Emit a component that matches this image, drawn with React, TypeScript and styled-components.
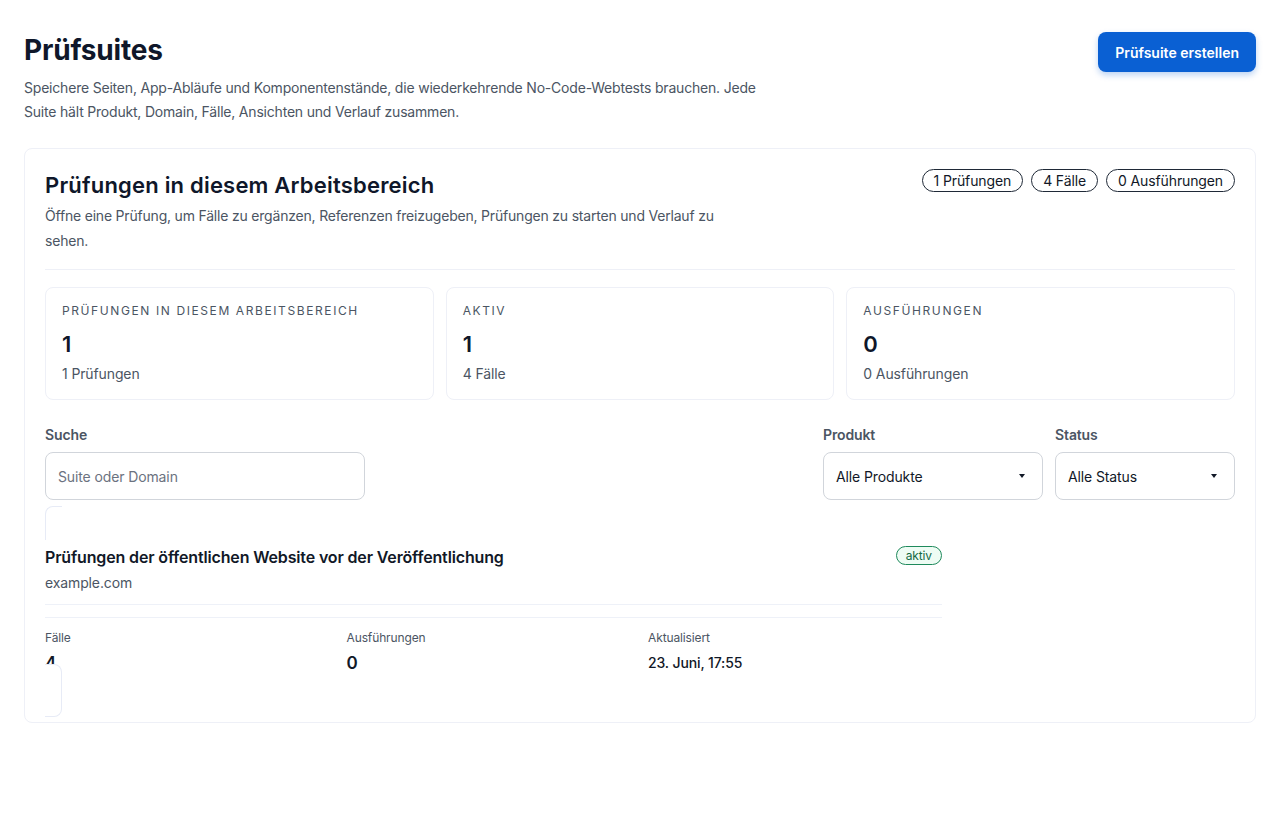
import React from "react";
import styled, { createGlobalStyle } from "styled-components";

const Global = createGlobalStyle`
  html, body { margin: 0; padding: 0; background: #ffffff; }
  body { font-family: Inter, "Noto Sans", Arial, sans-serif; color: #111827; -webkit-font-smoothing: antialiased; letter-spacing: -0.12px; }
  * { box-sizing: border-box; }
`;

const Page = styled.main`
  padding: 32px 24px 24px 24px;
`;

const TopBar = styled.header`
  display: flex;
  justify-content: space-between;
  align-items: flex-start;
`;

const TitleBlock = styled.div`
  display: flex;
  flex-direction: column;
  gap: 8px;
`;

const PageTitle = styled.h1`
  margin: 0;
  font-size: 28px;
  line-height: 36px;
  font-weight: 700;
  color: #0f172a;
  letter-spacing: -0.2px;
`;

const Lead = styled.p`
  margin: 0;
  max-width: 760px;
  font-size: 14px;
  line-height: 24px;
  color: #4b5563;
  letter-spacing: -0.2px;
`;

const PrimaryButton = styled.button`
  height: 40px;
  padding: 0 17px;
  border: none;
  border-radius: 8px;
  background: #0a60d3;
  color: #ffffff;
  font-family: inherit;
  font-size: 14px;
  font-weight: 600;
  letter-spacing: 0;
  box-shadow: 0 3px 6px rgba(10, 96, 211, 0.28);
  cursor: pointer;
`;

const Panel = styled.section`
  margin-top: 24px;
  border: 1px solid #eef0f7;
  border-radius: 8px;
  padding: 20px 20px 5px 20px;
`;

const PanelHeader = styled.div`
  display: flex;
  justify-content: space-between;
  align-items: flex-start;
  padding-bottom: 16px;
  border-bottom: 1px solid #eef0f7;
`;

const PanelTitleBlock = styled.div`
  display: flex;
  flex-direction: column;
  gap: 2px;
`;

const PanelTitle = styled.h2`
  margin: 0;
  font-size: 22px;
  line-height: 32px;
  font-weight: 600;
  color: #0f172a;
  letter-spacing: 0.2px;
`;

const PanelLead = styled.p`
  margin: 0;
  max-width: 690px;
  font-size: 14px;
  line-height: 25px;
  color: #4b5563;
  letter-spacing: -0.2px;
`;

const Pills = styled.div`
  display: flex;
  gap: 8px;
`;

const Pill = styled.span`
  display: inline-flex;
  align-items: center;
  height: 23px;
  padding: 0 11px;
  border: 1px solid #1f2937;
  border-radius: 999px;
  font-size: 14px;
  color: #111827;
  white-space: nowrap;
`;

const StatsGrid = styled.div`
  display: grid;
  grid-template-columns: repeat(3, 1fr);
  gap: 12px;
  margin-top: 17px;
`;

const StatCard = styled.div`
  border: 1px solid #eef0f7;
  border-radius: 8px;
  padding: 15px 16px 15px 16px;
  display: flex;
  flex-direction: column;
`;

const StatLabel = styled.div`
  font-size: 12px;
  line-height: 16px;
  letter-spacing: 1.6px;
  text-transform: uppercase;
  color: #4b5563;
`;

const StatValue = styled.div`
  margin-top: 11px;
  font-size: 22px;
  line-height: 28px;
  font-weight: 600;
  color: #0f172a;
`;

const StatSub = styled.div`
  margin-top: 6px;
  font-size: 14px;
  line-height: 20px;
  color: #4b5563;
`;

const Filters = styled.div`
  display: flex;
  gap: 12px;
  margin-top: 25px;
`;

const Field = styled.label<{ $w: number; $grow?: boolean }>`
  display: flex;
  flex-direction: column;
  gap: 7px;
  width: ${(p) => p.$w}px;
  margin-right: ${(p) => (p.$grow ? "auto" : "0")};
`;

const FieldLabel = styled.span`
  font-size: 14px;
  line-height: 20px;
  font-weight: 600;
  color: #4b5563;
`;

const TextInput = styled.input`
  height: 48px;
  border: 1px solid #d1d5db;
  border-radius: 8px;
  padding: 0 12px;
  font-family: inherit;
  font-size: 14px;
  letter-spacing: -0.12px;
  color: #111827;
  outline: none;
  &::placeholder { color: #6b7280; }
`;

const SelectBox = styled.div`
  height: 48px;
  border: 1px solid #d1d5db;
  border-radius: 8px;
  padding: 0 17px 0 12px;
  display: flex;
  align-items: center;
  justify-content: space-between;
  font-size: 14px;
  color: #111827;
`;

const Caret = styled.span`
  width: 0;
  height: 0;
  border-left: 3.5px solid transparent;
  border-right: 3.5px solid transparent;
  border-top: 4px solid #111827;
`;

const SuiteCard = styled.article`
  margin-top: 6px;
  width: 897px;
  display: flex;
  flex-direction: column;
`;

const FragmentStart = styled.div`
  width: 17px;
  height: 34px;
  border: 1px solid #e7ebf6;
  border-right: none;
  border-bottom: none;
  border-radius: 8px 0 0 0;
  background: #ffffff;
`;

const FragmentEnd = styled.div`
  position: relative;
  z-index: 1;
  margin-top: -11px;
  width: 17px;
  height: 53px;
  border: 1px solid #e7ebf6;
  border-left: none;
  border-radius: 0 8px 8px 0;
  background: #ffffff;
`;

const SuiteHead = styled.div`
  margin-top: 5px;
  display: flex;
  justify-content: space-between;
  align-items: center;
`;

const SuiteTitle = styled.h3`
  margin: 0;
  font-size: 16px;
  line-height: 24px;
  font-weight: 600;
  color: #111827;
  letter-spacing: -0.15px;
`;

const StatusBadge = styled.span`
  display: inline-flex;
  align-items: center;
  height: 19px;
  padding: 0 9px;
  margin-top: -4px;
  border: 1px solid #1f8a5c;
  border-radius: 999px;
  background: #eefcf4;
  color: #166a45;
  font-size: 12px;
`;

const Domain = styled.div`
  margin-top: 4px;
  font-size: 14px;
  line-height: 20px;
  color: #4b5563;
`;

const Rule = styled.hr<{ $gap: number }>`
  margin: ${(p) => p.$gap}px 0 0 0;
  border: none;
  border-top: 1px solid #eef1f8;
`;

const MetaGrid = styled.div`
  margin-top: 12px;
  display: grid;
  grid-template-columns: repeat(3, 294px);
  column-gap: 7.5px;
`;

const MetaItem = styled.div`
  display: flex;
  flex-direction: column;
  gap: 5px;
`;

const MetaLabel = styled.span`
  font-size: 12px;
  line-height: 16px;
  color: #4b5563;
`;

const MetaValue = styled.span<{ $bold?: boolean }>`
  font-size: ${(p) => (p.$bold ? "17px" : "14px")};
  line-height: 24px;
  font-weight: ${(p) => (p.$bold ? 600 : 500)};
  color: #111827;
`;

const stats = [
  { label: "Prüfungen in diesem Arbeitsbereich", value: "1", sub: "1 Prüfungen" },
  { label: "Aktiv", value: "1", sub: "4 Fälle" },
  { label: "Ausführungen", value: "0", sub: "0 Ausführungen" },
];

export default function App() {
  return (
    <>
      <Global />
      <Page>
        <TopBar>
          <TitleBlock>
            <PageTitle>Prüfsuites</PageTitle>
            <Lead>
              Speichere Seiten, App-Abläufe und Komponentenstände, die wiederkehrende No-Code-Webtests brauchen. Jede
              Suite hält Produkt, Domain, Fälle, Ansichten und Verlauf zusammen.
            </Lead>
          </TitleBlock>
          <PrimaryButton>Prüfsuite erstellen</PrimaryButton>
        </TopBar>

        <Panel>
          <PanelHeader>
            <PanelTitleBlock>
              <PanelTitle>Prüfungen in diesem Arbeitsbereich</PanelTitle>
              <PanelLead>
                Öffne eine Prüfung, um Fälle zu ergänzen, Referenzen freizugeben, Prüfungen zu starten und Verlauf zu
                sehen.
              </PanelLead>
            </PanelTitleBlock>
            <Pills>
              <Pill>1 Prüfungen</Pill>
              <Pill>4 Fälle</Pill>
              <Pill>0 Ausführungen</Pill>
            </Pills>
          </PanelHeader>

          <StatsGrid>
            {stats.map((s) => (
              <StatCard key={s.label}>
                <StatLabel>{s.label}</StatLabel>
                <StatValue>{s.value}</StatValue>
                <StatSub>{s.sub}</StatSub>
              </StatCard>
            ))}
          </StatsGrid>

          <Filters>
            <Field $w={320} $grow>
              <FieldLabel>Suche</FieldLabel>
              <TextInput placeholder="Suite oder Domain" />
            </Field>
            <Field $w={220}>
              <FieldLabel>Produkt</FieldLabel>
              <SelectBox>
                Alle Produkte
                <Caret />
              </SelectBox>
            </Field>
            <Field $w={180}>
              <FieldLabel>Status</FieldLabel>
              <SelectBox>
                Alle Status
                <Caret />
              </SelectBox>
            </Field>
          </Filters>

          <SuiteCard>
            <FragmentStart />
            <SuiteHead>
              <SuiteTitle>Prüfungen der öffentlichen Website vor der Veröffentlichung</SuiteTitle>
              <StatusBadge>aktiv</StatusBadge>
            </SuiteHead>
            <Domain>example.com</Domain>
            <Rule $gap={11} />
            <Rule $gap={12} />
            <MetaGrid>
              <MetaItem>
                <MetaLabel>Fälle</MetaLabel>
                <MetaValue $bold>4</MetaValue>
              </MetaItem>
              <MetaItem>
                <MetaLabel>Ausführungen</MetaLabel>
                <MetaValue $bold>0</MetaValue>
              </MetaItem>
              <MetaItem>
                <MetaLabel>Aktualisiert</MetaLabel>
                <MetaValue>23. Juni, 17:55</MetaValue>
              </MetaItem>
            </MetaGrid>
            <FragmentEnd />
          </SuiteCard>
        </Panel>
      </Page>
    </>
  );
}
